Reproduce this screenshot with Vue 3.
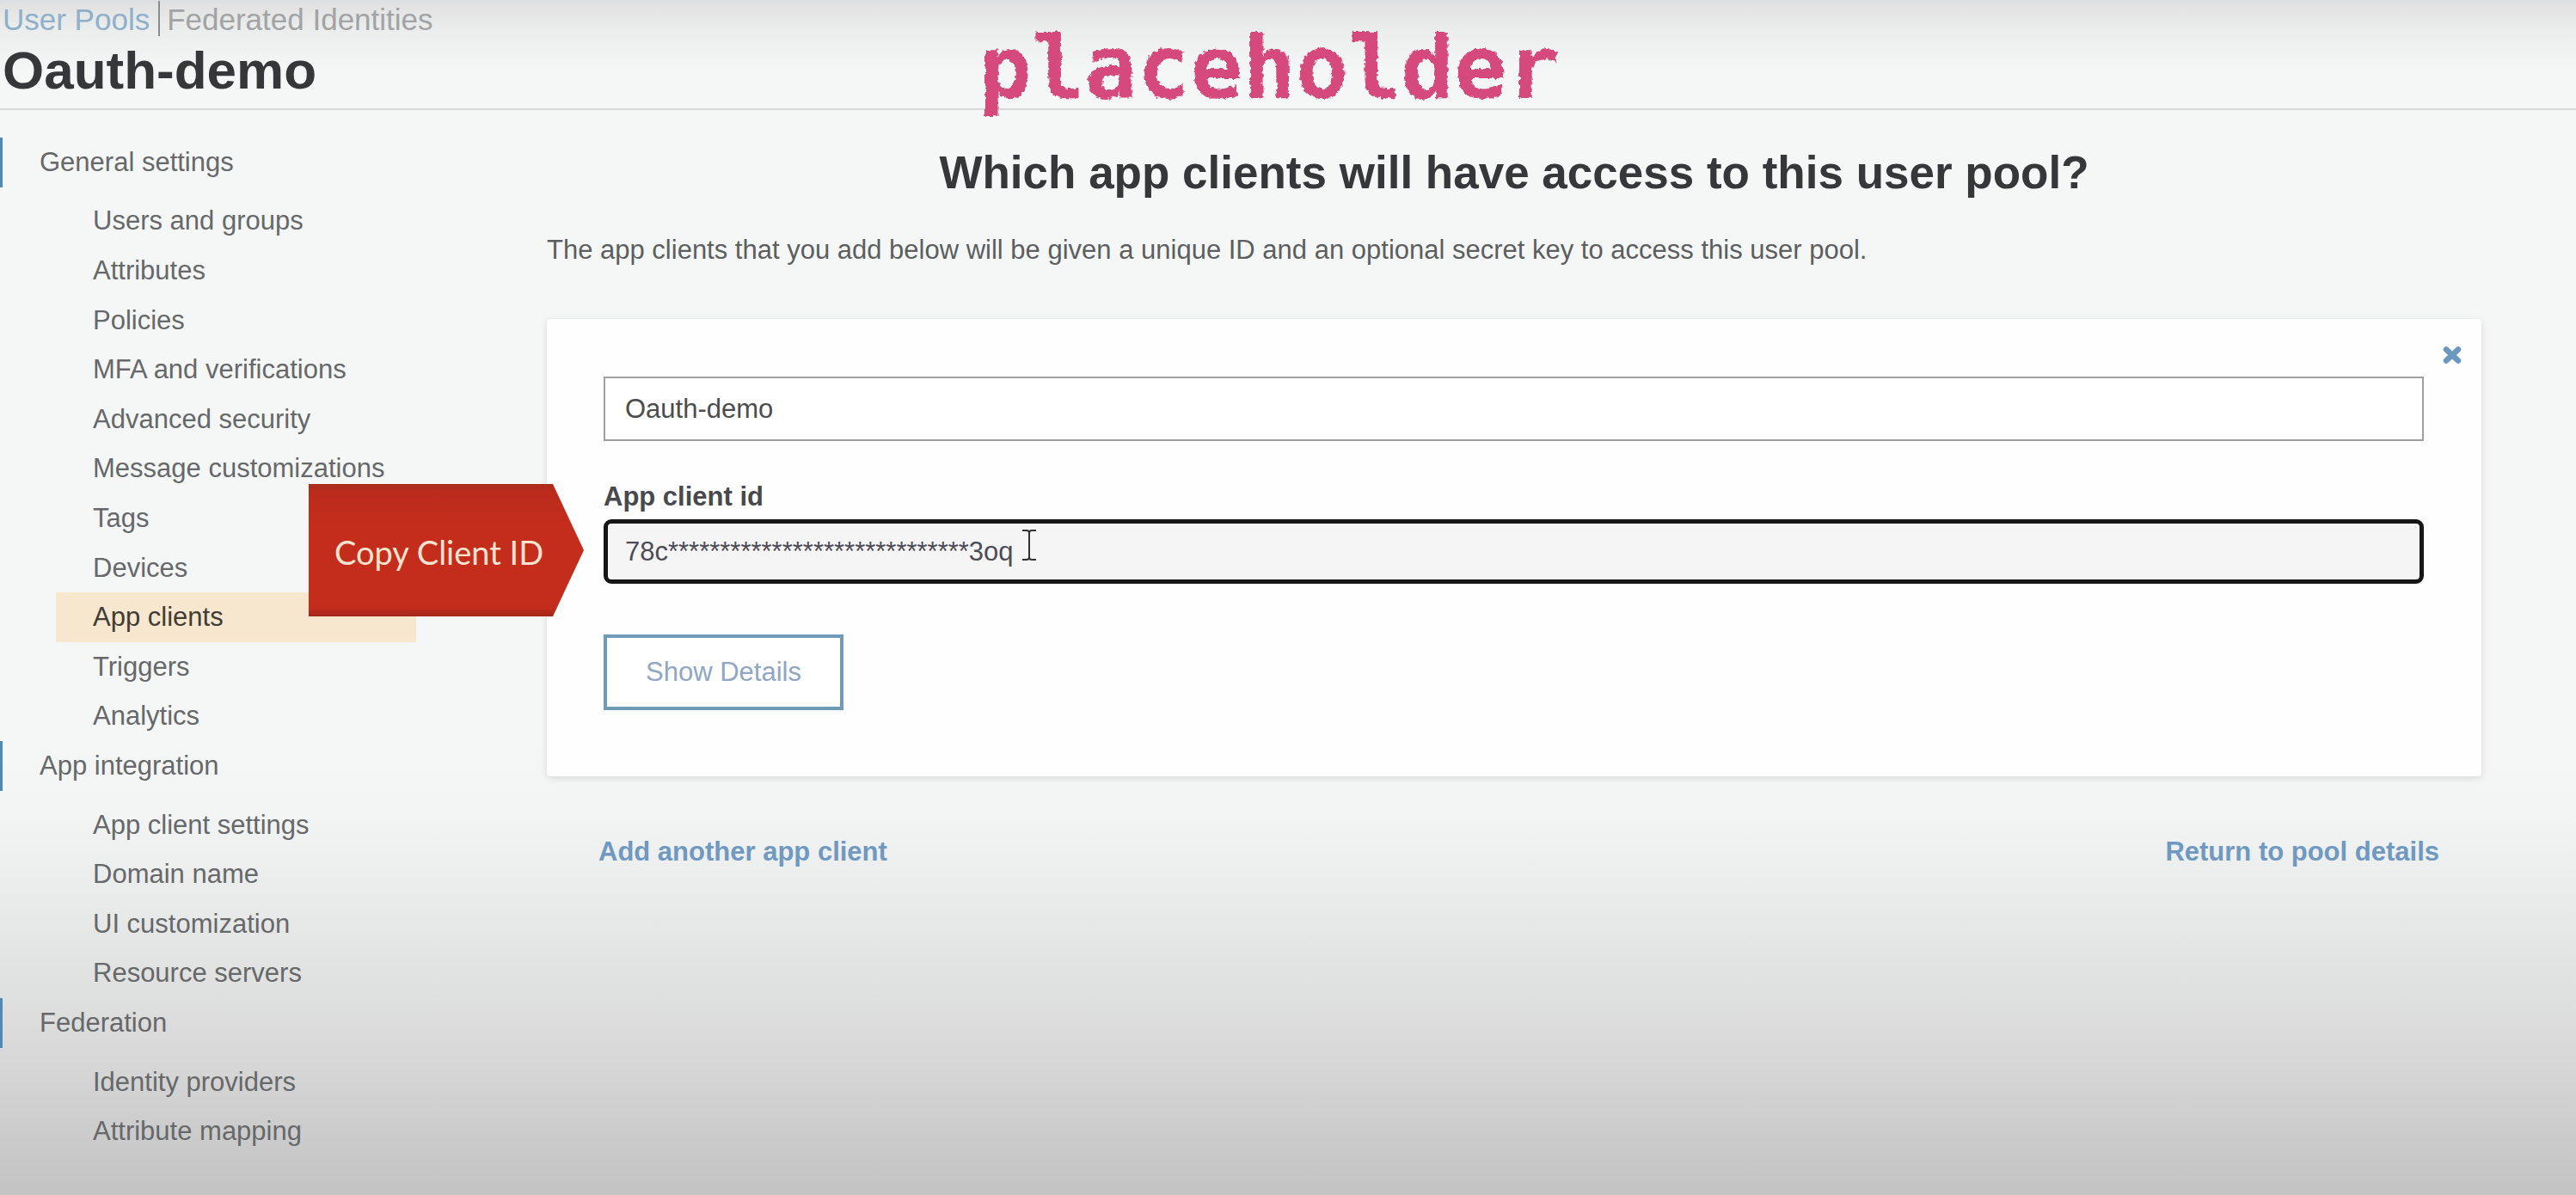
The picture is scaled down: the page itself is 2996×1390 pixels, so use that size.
<script setup>
import { ref } from 'vue'

const groups = [
  {
    title: 'General settings',
    items: [
      'Users and groups',
      'Attributes',
      'Policies',
      'MFA and verifications',
      'Advanced security',
      'Message customizations',
      'Tags',
      'Devices',
      'App clients',
      'Triggers',
      'Analytics'
    ]
  },
  {
    title: 'App integration',
    items: ['App client settings', 'Domain name', 'UI customization', 'Resource servers']
  },
  {
    title: 'Federation',
    items: ['Identity providers', 'Attribute mapping']
  }
]

const active = ref('App clients')
const clientName = ref('Oauth-demo')
const clientId = '78c' + '*'.repeat(29) + '3oq'
</script>

<template>
  <div class="page">
    <header class="header">
      <nav class="crumbs" aria-label="Pools">
        <a href="#" class="crumb current">User Pools</a>
        <a href="#" class="crumb">Federated Identities</a>
      </nav>
      <h1 class="title">Oauth-demo</h1>
    </header>

    <div class="body">
      <nav class="sidebar" aria-label="Settings">
        <section
          v-for="group in groups"
          :key="group.title"
          class="group"
          :style="{ flexGrow: group.items.length + 1 }"
        >
          <a href="#" class="group-title">{{ group.title }}</a>
          <ul class="items" :style="{ flexGrow: group.items.length }">
            <li v-for="item in group.items" :key="item" class="row">
              <a
                href="#"
                class="item"
                :class="{ active: item === active }"
                @click.prevent="active = item"
              >{{ item }}</a>
            </li>
          </ul>
        </section>
      </nav>

      <main class="main">
        <h2 class="heading">Which app clients will have access to this user pool?</h2>
        <p class="intro">
          The app clients that you add below will be given a unique ID and an optional secret key to access this user pool.
        </p>

        <form class="card" @submit.prevent>
          <button type="button" class="close" aria-label="Remove app client">
            <svg viewBox="0 0 22 20" width="22" height="20" aria-hidden="true">
              <path d="M4 3.500 18 16.500M18 3.500 4 16.500" fill="none" stroke="#6c98bf" stroke-width="6.500" stroke-linecap="round" />
            </svg>
          </button>
          <input v-model="clientName" class="text name" type="text" aria-label="App client name" />
          <label class="label" for="client-id">App client id</label>
          <div class="field">
            <input id="client-id" class="text id" type="text" readonly :value="clientId" />
            <div class="callout">
              <svg class="callout-shape" viewBox="0 0 320 154" preserveAspectRatio="none" aria-hidden="true">
                <defs>
                  <linearGradient id="red" x1="0" y1="0" x2="0" y2="1">
                    <stop offset="0" stop-color="#a82c1c" />
                    <stop offset="0.060" stop-color="#bb2c1c" />
                    <stop offset="0.300" stop-color="#c42c1b" />
                    <stop offset="0.930" stop-color="#c42c1b" />
                    <stop offset="1" stop-color="#a3281a" />
                  </linearGradient>
                </defs>
                <path d="M0 0H284L320 77L284 154H0Z" fill="url(#red)" />
              </svg>
              <span class="callout-text">Copy Client ID</span>
            </div>
            <svg class="caret" viewBox="0 0 18 38" width="18" height="38" aria-hidden="true">
              <path d="M1 2H6Q9 2 9 5Q9 2 12 2H17M9 4V34M1 36H6Q9 36 9 33Q9 36 12 36H17" fill="none" stroke="#333" stroke-width="2" />
            </svg>
          </div>
          <button type="button" class="details">Show Details</button>
        </form>

        <div class="links">
          <a href="#" class="link">Add another app client</a>
          <a href="#" class="link">Return to pool details</a>
        </div>
      </main>
    </div>

    <svg class="defs" width="0" height="0" aria-hidden="true">
      <filter id="chalk" x="-5%" y="-5%" width="110%" height="110%">
        <feTurbulence type="fractalNoise" baseFrequency="0.2" numOctaves="2" seed="4" result="noise" />
        <feDisplacementMap in="SourceGraphic" in2="noise" scale="6" xChannelSelector="R" yChannelSelector="G" />
      </filter>
    </svg>
    <div class="scribble">placeholder</div>
  </div>
</template>

<style>
body {
  margin: 0;
}
</style>

<style scoped>
.page {
  position: relative;
  display: flex;
  flex-direction: column;
  box-sizing: border-box;
  min-height: 100vh;
  font-family: "Liberation Sans", Arial, sans-serif;
  font-size: 31px;
  line-height: 40px;
  color: #66686a;
  background:
    linear-gradient(to bottom, #dddee5 0, #e2e2e3 6px, #ebecec 32px, rgba(244, 246, 246, 0) 84px) top / 100% 84px no-repeat,
    linear-gradient(to bottom, #f5f7f7 0, #f5f7f7 62%, #f3f4f4 68%, #e7e8e8 77%, #d8d9d8 88%, #cdcdcd 94%, #c2c3c2 100%);
}

a {
  color: inherit;
  text-decoration: none;
}

.header {
  padding: 1px 3px 12px;
  border-bottom: 2px solid #d8dada;
}

.crumbs {
  display: flex;
  font-size: 35px;
  line-height: 44px;
  color: #a1a3a5;
}

.crumb.current {
  color: #8fb0cb;
  padding-right: 10px;
  margin-right: 8px;
  border-right: 2px solid #8a8c8e;
  line-height: 38px;
  padding-top: 3px;
  margin-bottom: 3px;
}

.title {
  margin: 5px 0 0;
  font-size: 62px;
  line-height: 64px;
  color: #35373b;
}

.body {
  display: flex;
  flex: 1;
}

.sidebar {
  display: flex;
  flex-direction: column;
  box-sizing: border-box;
  flex: 0 0 636px;
  padding: 32px 152px 45px 0;
}

.group {
  display: flex;
  flex-direction: column;
}

.group-title {
  display: flex;
  align-items: center;
  flex: 1 0 auto;
  padding-left: 43px;
  border-left: 3px solid #4f8ab4;
}

.items {
  display: flex;
  flex-direction: column;
  margin: 0 0 0 65px;
  padding: 11px 0 0;
  list-style: none;
}

.row {
  display: flex;
  flex: 1 0 auto;
}

.item {
  display: flex;
  align-items: center;
  flex: 1;
  padding-left: 43px;
}

.item.active {
  color: #423c34;
  background: #f7e7cf;
}

.main {
  flex: 1;
  min-width: 0;
  padding: 43px 110px 60px 0;
}

.heading {
  margin: 0 0 40px;
  font-size: 53px;
  line-height: 60px;
  text-align: center;
  color: #35373b;
}

.intro {
  margin: 0 0 60px;
  color: #5c5e60;
}

.card {
  position: relative;
  display: flex;
  flex-direction: column;
  align-items: flex-start;
  padding: 67px 67px 77px 66px;
  background: #fefefe;
  border-radius: 4px;
  box-shadow: 0 2px 8px rgba(0, 0, 0, 0.12);
}

.close {
  position: absolute;
  top: 32px;
  right: 23px;
  display: flex;
  padding: 0;
  border: 0;
  background: none;
}

.text {
  display: block;
  box-sizing: border-box;
  width: 100%;
  height: 75px;
  margin: 0;
  font: inherit;
  outline: none;
}

.name {
  padding: 0 23px;
  color: #4b4c4e;
  background: #fff;
  border: 2px solid #a0a0a0;
}

.label {
  margin: 45px 0 6px;
  font-weight: bold;
  color: #48494c;
}

.field {
  position: relative;
  width: 100%;
}

.id {
  padding: 0 20px;
  color: #4d4b55;
  background: #f5f5f5;
  border: 5px solid #161616;
  border-radius: 9px;
}

.callout {
  position: absolute;
  right: 100%;
  top: 50%;
  width: 320px;
  height: 154px;
  margin: -79px 23px 0 0;
  display: flex;
  align-items: center;
}

.callout-shape {
  position: absolute;
  inset: 0;
  width: 100%;
  height: 100%;
}

.callout-text {
  position: relative;
  padding: 4px 0 0 30px;
  font-family: Lato, Carlito, sans-serif;
  font-size: 38px;
  white-space: nowrap;
  color: #fbe3d2;
}

.caret {
  position: absolute;
  left: 486px;
  top: 11px;
}

.details {
  height: 88px;
  margin-top: 59px;
  padding: 0 45px;
  font: inherit;
  color: #8fa6c4;
  background: #fff;
  border: 4px solid #6f9ab8;
}

.links {
  display: flex;
  justify-content: space-between;
  padding: 68px 49px 0 60px;
}

.link {
  font-weight: bold;
  color: #6f99c1;
}

.defs {
  position: absolute;
}

.scribble {
  position: absolute;
  top: 19px;
  left: 38%;
  font-family: Chalkduster, "DejaVu Sans Mono", monospace;
  font-size: 102px;
  font-weight: bold;
  line-height: 120px;
  color: #d64a7b;
  filter: url(#chalk);
}
</style>
